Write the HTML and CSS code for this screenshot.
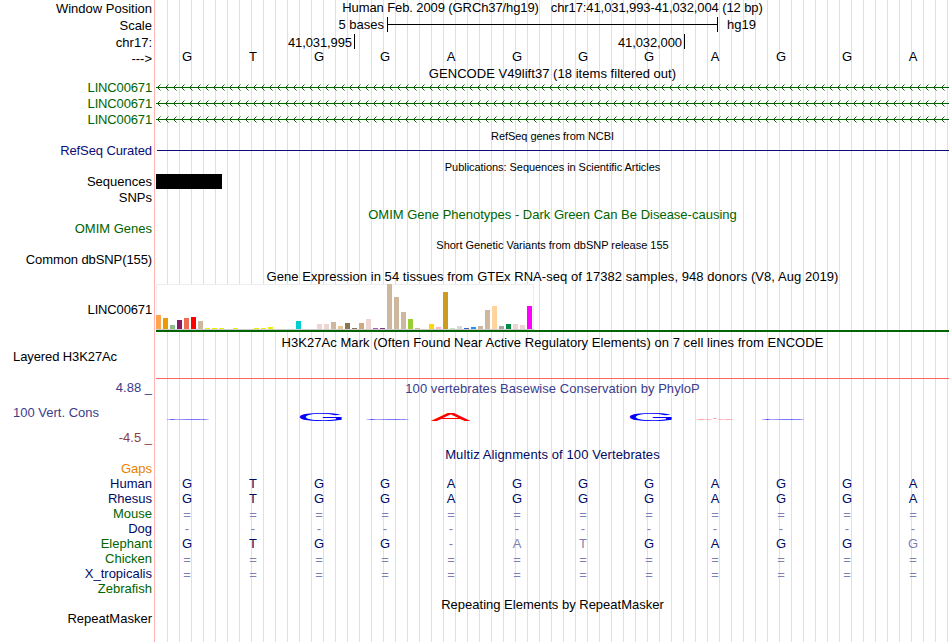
FILE: index.html
```html
<!DOCTYPE html>
<html lang="en">

<head>
    <meta charset="UTF-8">
    <title>Human chr17:41,031,993-41,032,004</title>
    <link rel="stylesheet" href="styles.css">
</head>

<body>
    <svg class="defs" width="0" height="0">
        <defs>
            <pattern id="strand" x="0" y="0" width="8" height="9" patternUnits="userSpaceOnUse">
                <path d="M1.5 4.5L4.5 1.5M1.5 4.5L4.5 7.5" fill="none" stroke="#006400" stroke-width="1" />
            </pattern>
        </defs>
    </svg>

    <main class="browser">
        <div class="row h17">
            <div class="label">Window Position</div>
            <div class="title position"><span>Human Feb. 2009 (GRCh37/hg19)</span><span>chr17:41,031,993-41,032,004 (12 bp)</span></div>
        </div>
        <div class="row h17">
            <div class="label">Scale</div>
            <div class="scale"><span class="bases-label">5 bases</span><span class="scale-bar"></span><span>hg19</span></div>
        </div>
        <div class="row h17">
            <div class="label">chr17:</div>
            <div class="ruler"><span>41,031,995</span><span>41,032,000</span></div>
        </div>
        <div class="row h14">
            <div class="label">---&gt;</div>
            <div class="seq ruler-seq" data-seq="GTGGAGGGAGGA"></div>
        </div>

        <div class="row h15">
            <div class="title gencode">GENCODE V49lift37 (18 items filtered out)</div>
        </div>
        <div class="row h16 green">
            <div class="label gene">LINC00671</div>
            <svg class="transcript" width="793" height="9"><rect width="792" height="9" fill="url(#strand)" /><rect y="4" width="793" height="1" /></svg>
        </div>
        <div class="row h16 green">
            <div class="label gene">LINC00671</div>
            <svg class="transcript" width="793" height="9"><rect width="792" height="9" fill="url(#strand)" /><rect y="4" width="793" height="1" /></svg>
        </div>
        <div class="row h16 green">
            <div class="label gene">LINC00671</div>
            <svg class="transcript" width="793" height="9"><rect width="792" height="9" fill="url(#strand)" /><rect y="4" width="793" height="1" /></svg>
        </div>

        <div class="row h15">
            <div class="title small">RefSeq genes from NCBI</div>
        </div>
        <div class="row h15 refseq">
            <div class="label tight">RefSeq Curated</div>
            <div class="refseq-line"></div>
        </div>

        <div class="row h16">
            <div class="title small">Publications: Sequences in Scientific Articles</div>
        </div>
        <div class="row h15">
            <div class="label">Sequences</div>
            <div class="sequence-block"></div>
        </div>
        <div class="row h16 snps">
            <div class="label">SNPs</div>
        </div>

        <div class="row h16 green">
            <div class="title omim">OMIM Gene Phenotypes - Dark Green Can Be Disease-causing</div>
        </div>
        <div class="row h15 green">
            <div class="label">OMIM Genes</div>
        </div>

        <div class="row h16">
            <div class="title small snp">Short Genetic Variants from dbSNP release 155</div>
        </div>
        <div class="row h15">
            <div class="label tight">Common dbSNP(155)</div>
        </div>

        <div class="row h17">
            <div class="title wide gtex-title">Gene Expression in 54 tissues from GTEx RNA-seq of 17382 samples, 948 donors (V8, Aug 2019)</div>
        </div>
        <div class="row gtex-row">
            <div class="label gene">LINC00671</div>
            <div class="gtex">
                <div class="gtex-chart" id="gtex"></div>
            </div>
        </div>

        <div class="row h17 h3k-title-row">
            <div class="title wide">H3K27Ac Mark (Often Found Near Active Regulatory Elements) on 7 cell lines from ENCODE</div>
        </div>
        <div class="row h3k-row">
            <div class="label left tight">Layered H3K27Ac</div>
            <div class="h3k-track"></div>
        </div>

        <div class="row cons-row">
            <div class="cons-labels">
                <div class="label">4.88 _</div>
                <div class="label left">100 Vert. Cons</div>
                <div class="label low">-4.5 _</div>
            </div>
            <div class="cons-track">
                <div class="title wide">100 vertebrates Basewise Conservation by PhyloP</div>
                <svg class="logo" width="793" height="12">
                    <g class="logo-blue">
                        <text class="flat" transform="translate(7.5 7.8) scale(.64 .022)">G</text>
                        <text transform="translate(140.6 8.9) scale(.64 .108)">G</text>
                        <text class="flat" transform="translate(207.3 7.8) scale(.64 .022)">G</text>
                        <text transform="translate(470.6 8.9) scale(.64 .108)">G</text>
                        <text class="flat" transform="translate(602.5 7.8) scale(.64 .022)">G</text>
                    </g>
                    <g class="logo-red">
                        <text transform="translate(274.8 9) scale(.6 .116)">A</text>
                        <text class="flat" transform="translate(538.8 7.8) scale(.6 .022)">A</text>
                    </g>
                </svg>
            </div>
        </div>

        <div class="row h15 multiz">
            <div class="title multiz-title">Multiz Alignments of 100 Vertebrates</div>
        </div>
        <div class="row h15 gaps">
            <div class="label">Gaps</div>
        </div>
        <div class="row h15 species">
            <div class="label">Human</div>
            <div class="seq" data-seq="GTGGAGGGAGGA"></div>
        </div>
        <div class="row h15 species">
            <div class="label">Rhesus</div>
            <div class="seq" data-seq="GTGGAGGGAGGA"></div>
        </div>
        <div class="row h15 species">
            <div class="label green">Mouse</div>
            <div class="seq unaligned" data-seq="============"></div>
        </div>
        <div class="row h15 species">
            <div class="label">Dog</div>
            <div class="seq" data-seq="------------"></div>
        </div>
        <div class="row h15 species">
            <div class="label green">Elephant</div>
            <div class="seq" data-seq="GTGG-atGAGGg"></div>
        </div>
        <div class="row h15 species">
            <div class="label green">Chicken</div>
            <div class="seq unaligned" data-seq="============"></div>
        </div>
        <div class="row h15 species">
            <div class="label">X_tropicalis</div>
            <div class="seq unaligned" data-seq="============"></div>
        </div>
        <div class="row h15 species">
            <div class="label green">Zebrafish</div>
        </div>

        <div class="row h15">
            <div class="title">Repeating Elements by RepeatMasker</div>
        </div>
        <div class="row h15">
            <div class="label">RepeatMasker</div>
        </div>
    </main>

    <script>
        // lower case = base differs from human
        document.querySelectorAll('.seq').forEach(el => {
            for (const base of el.dataset.seq) {
                const cell = document.createElement('span');
                cell.textContent = base.toUpperCase();
                if (!/[A-Z]/.test(base)) cell.className = 'mismatch';
                el.appendChild(cell);
            }
        });

        // GTEx tissues: [height in px, color]
        const tissues = [
            [14, '#ffa54f'], [11, '#ee9a00'], [4, '#8fbc8f'], [9, '#8b1c62'], [11, '#ee6a50'], [12, '#ff0000'],
            [8, '#cdb79e'], [1, '#eeee00'], [1, '#eeee00'], [1, '#eeee00'], [0, '#eeee00'], [1, '#eeee00'],
            [0, '#eeee00'], [0, '#eeee00'], [1, '#eeee00'], [1, '#eeee00'], [2, '#eeee00'], [0, '#eeee00'],
            [0, '#eeee00'], [0, '#eeee00'], [8, '#00cdcd'], [0, '#ee82ee'], [0, '#9ac0cd'], [5, '#eed5d2'],
            [5, '#eed5d2'], [7, '#cdb79e'], [3, '#eec591'], [6, '#8b7355'], [1, '#8b7355'], [6, '#cdaa7d'],
            [10, '#eed5d2'], [1, '#b452cd'], [1, '#7a378b'], [45, '#cdb79e'], [32, '#cdb79e'], [17, '#cdb79e'],
            [10, '#9acd32'], [1, '#cdb79e'], [0, '#7a67ee'], [5, '#ffd700'], [2, '#ffb6c1'], [37, '#cd9b1d'],
            [1, '#b4eeb4'], [3, '#d9d9d9'], [1, '#3a5fcd'], [2, '#1e90ff'], [3, '#cdb79e'], [19, '#cdb79e'],
            [23, '#ffd39b'], [3, '#a6a6a6'], [5, '#008b45'], [5, '#eed5d2'], [4, '#eed5d2'], [23, '#ff00ff']
        ];
        const chart = document.getElementById('gtex');
        for (const [height, color] of tissues) {
            const bar = document.createElement('i');
            bar.style.height = height + 'px';
            bar.style.background = color;
            chart.appendChild(bar);
        }
    </script>
</body>

</html>
```

FILE: styles.css
```css
body {
    margin: 0;
    background: #fff;
    color: #000;
    font-family: "Liberation Sans", Arial, sans-serif;
    font-size: 13px;
}

.defs {
    display: block;
}

/* guide lines every 12px, red line between labels and tracks */
.browser {
    width: 949px;
    height: 642px;
    overflow: hidden;
    white-space: nowrap;
    background-image:
        linear-gradient(#ffb4b4, #ffb4b4),
        repeating-linear-gradient(to right, #dcdcff 0, #dcdcff 1px, transparent 1px, transparent 12px);
    background-size: 1px 100%, 782px 100%;
    background-position: 154px 0, 167px 0;
    background-repeat: no-repeat;
}

.row {
    display: grid;
    grid-template-columns: 152px 793px;
    column-gap: 4px;
}

.h14 { height: 14px; line-height: 15px; }
.h15 { height: 15px; line-height: 15px; }
.h16 { height: 16px; line-height: 16px; }
.h17 { height: 17px; line-height: 17px; }

.label {
    grid-column: 1;
    text-align: right;
}

.label.left {
    text-align: left;
    padding-left: 13px;
}

.label.gene {
    letter-spacing: -0.15px;
}

.label.tight {
    letter-spacing: -0.1px;
}

.snps {
    line-height: 17px;
}

.title {
    grid-column: 2;
    text-align: center;
}

.h15 .title,
.h16 .title {
    line-height: 17px;
}

.title.small {
    font-size: 11px;
    letter-spacing: -0.05px;
}

.h15 .title.small {
    line-height: 16px;
}

.h16 .title.small {
    line-height: 18px;
}

.title.snp {
    letter-spacing: -0.02px;
}

.title.wide {
    letter-spacing: 0.05px;
}

.title.gencode {
    letter-spacing: 0.04px;
}

.h16 .title.omim {
    line-height: 19px;
}

.gtex-title {
    line-height: 19px;
}

.green,
.species .green {
    color: #006400;
}

.title.position {
    display: flex;
    justify-content: center;
    gap: 12px;
    line-height: 15px;
    letter-spacing: -0.1px;
}

.scale {
    display: flex;
    line-height: 16px;
}

.bases-label {
    width: 228px;
    text-align: right;
}

.scale-bar {
    width: 329px;
    height: 15px;
    margin: 0 9px 0 3px;
    border: solid #000;
    border-width: 0 1px;
    background: linear-gradient(#000, #000) 0 7px / 100% 1px no-repeat;
}

.ruler {
    display: flex;
    letter-spacing: -0.1px;
}

.ruler span {
    box-sizing: border-box;
    height: 15px;
    width: 199px;
    padding-right: 2px;
    border-right: 1px solid #000;
    text-align: right;
}

.ruler span + span {
    width: 330px;
}

.seq {
    display: grid;
    grid-template-columns: repeat(12, 66px);
    margin-left: -2px;
    text-align: center;
}

.ruler-seq {
    line-height: 12px;
}

.unaligned {
    line-height: 17px;
}

.mismatch {
    color: #8080b4;
}

.transcript {
    display: block;
    margin-top: 3px;
    fill: #006400;
}

.refseq {
    color: #0c0c78;
}

.refseq-line {
    height: 1px;
    margin: 7px 0 0 1px;
    background: #0c0c78;
}

.sequence-block {
    width: 66px;
    background: #000;
}

.gtex-row {
    height: 48px;
    line-height: 51px;
}

.gtex {
    height: 46px;
    border-bottom: 2px solid #006400;
}

.gtex-chart {
    box-sizing: border-box;
    display: flex;
    align-items: flex-end;
    gap: 2px;
    width: 378px;
    height: 46px;
    background: #fff;
    border-bottom: 1px solid #ccc;
    box-shadow: inset 0 1px #eee, inset -1px 0 #eee, inset 1px 0 #eee;
}

.gtex-chart i {
    width: 5px;
}

.h3k-title-row {
    padding-top: 2px;
}

.h3k-row {
    height: 28px;
    line-height: 12px;
}

.h3k-track {
    height: 27px;
    border-bottom: 1px solid #ff6464;
}

.cons-row {
    height: 67px;
    color: #3c3c8c;
}

.cons-labels {
    display: flex;
    flex-direction: column;
    justify-content: space-between;
    line-height: 17px;
}

.low {
    color: #8c3c3c;
}

.cons-track .title {
    line-height: 19px;
}

.logo {
    display: block;
    margin-top: 14px;
    font-size: 100px;
}

/* scores near zero are squashed almost to a line */
.flat {
    stroke: currentColor;
    stroke-width: 0.4px;
    vector-effect: non-scaling-stroke;
}

.logo-blue {
    fill: #00f;
    color: #00f;
}

.logo-red {
    fill: #f00;
    color: #f00;
}

.multiz,
.species {
    color: #000a64;
}

.multiz-title {
    letter-spacing: 0.1px;
}

.gaps {
    color: #e68200;
}
```
